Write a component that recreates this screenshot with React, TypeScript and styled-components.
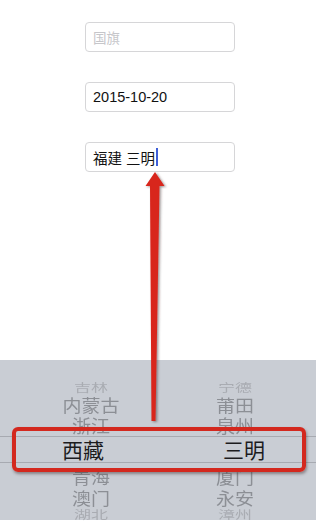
import React from "react";
import styled, { createGlobalStyle } from "styled-components";

const GlobalStyle = createGlobalStyle`
  html, body { margin: 0; padding: 0; background: #ffffff; }
  body { font-family: "Liberation Sans", "Noto Sans CJK SC", sans-serif; }
`;

const Page = styled.div`
  position: relative;
  width: 316px;
  height: 522px;
  display: flex;
  flex-direction: column;
  overflow: hidden;
  background: #ffffff;
`;

const Form = styled.div`
  display: flex;
  flex-direction: column;
  gap: 30px;
  padding: 22px 0 0 85px;
`;

const Field = styled.div`
  box-sizing: border-box;
  width: 150px;
  height: 30px;
  border: 1px solid #d6d6d8;
  border-radius: 4px;
  display: flex;
  align-items: center;
  padding: 0 7px;
  font-size: 14.5px;
  color: #111;
  background: #fff;
`;

const Placeholder = styled.span`
  color: #c6c6ca;
  font-size: 13.5px;
`;

const Caret = styled.span`
  display: inline-block;
  width: 2px;
  height: 18px;
  margin-left: 1px;
  background: #3f5fd8;
`;

const Spacer = styled.div`
  flex: 1;
`;

const Picker = styled.div`
  position: relative;
  height: 160px;
  margin-bottom: 2px;
  background: #c9cdd4;
  display: grid;
  grid-template-columns: 182px 106px;
  padding-top: 18px;
  box-sizing: border-box;
`;

const Band = styled.div`
  position: absolute;
  left: 0;
  right: 0;
  top: 76px;
  height: 27px;
  border-top: 1px solid #a7aab1;
  border-bottom: 1px solid #a7aab1;
  box-sizing: border-box;
`;

const Column = styled.div`
  display: flex;
  flex-direction: column;
  align-items: center;
  position: relative;
`;

const Item = styled.div<{ $h: number; $size: number; $color: string; $sy: number; $dx: number }>`
  height: ${(p) => p.$h}px;
  line-height: ${(p) => p.$h}px;
  font-size: ${(p) => p.$size}px;
  color: ${(p) => p.$color};
  transform: translateX(${(p) => p.$dx}px) scaleY(${(p) => p.$sy});
  white-space: nowrap;
  font-family: "Noto Sans CJK SC", sans-serif;
`;

const Highlight = styled.div`
  position: absolute;
  left: 12px;
  top: 67px;
  width: 294px;
  height: 45px;
  box-sizing: border-box;
  border: 4px solid #d3281e;
  border-radius: 6px;
  box-shadow: 1px 2px 3px rgba(60, 40, 40, 0.45);
  pointer-events: none;
`;

const ArrowLayer = styled.svg`
  position: absolute;
  left: 0;
  top: 0;
  width: 316px;
  height: 522px;
  pointer-events: none;
`;

type Row = { t: string; h: number; size: number; color: string; sy: number; dx?: number };

const rowsFor = (labels: string[], selDx: number): Row[] => [
  { t: labels[0], h: 18, size: 17, color: "#a9acb2", sy: 0.7 },
  { t: labels[1], h: 18, size: 19, color: "#8c8f95", sy: 0.88 },
  { t: labels[2], h: 22, size: 19, color: "#8c8f95", sy: 0.95 },
  { t: labels[3], h: 27, size: 21, color: "#1c1c1e", sy: 1, dx: selDx },
  { t: labels[4], h: 26, size: 19, color: "#8c8f95", sy: 0.95 },
  { t: labels[5], h: 18, size: 19, color: "#8c8f95", sy: 0.88 },
  { t: labels[6], h: 14, size: 17, color: "#a9acb2", sy: 0.7 },
];

const left = rowsFor(["吉林", "内蒙古", "浙江", "西藏", "青海", "澳门", "湖北"], -8);
const right = rowsFor(["宁德", "莆田", "泉州", "三明", "厦门", "永安", "漳州"], 9);

function PickerColumn({ rows }: { rows: Row[] }) {
  return (
    <Column>
      {rows.map((r) => (
        <Item key={r.t} $h={r.h} $size={r.size} $color={r.color} $sy={r.sy} $dx={r.dx ?? 0}>
          {r.t}
        </Item>
      ))}
    </Column>
  );
}

export default function App() {
  return (
    <>
      <GlobalStyle />
      <Page>
        <Form>
          <Field>
            <Placeholder>国旗</Placeholder>
          </Field>
          <Field>2015-10-20</Field>
          <Field>
            福建 三明
            <Caret />
          </Field>
        </Form>
        <Spacer />
        <Picker>
          <Band />
          <PickerColumn rows={left} />
          <PickerColumn rows={right} />
          <Highlight />
        </Picker>
        <ArrowLayer viewBox="0 0 316 522">
          <defs>
            <filter id="sh" x="-50%" y="-10%" width="200%" height="120%">
              <feDropShadow dx="1.5" dy="1" stdDeviation="1" floodColor="#3a2a2a" floodOpacity="0.5" />
            </filter>
          </defs>
          <polygon
            points="155,172 145.5,186 150,186 151.5,421 155.5,421 159.5,186 164.5,186"
            fill="#d8261c"
            filter="url(#sh)"
          />
        </ArrowLayer>
      </Page>
    </>
  );
}
